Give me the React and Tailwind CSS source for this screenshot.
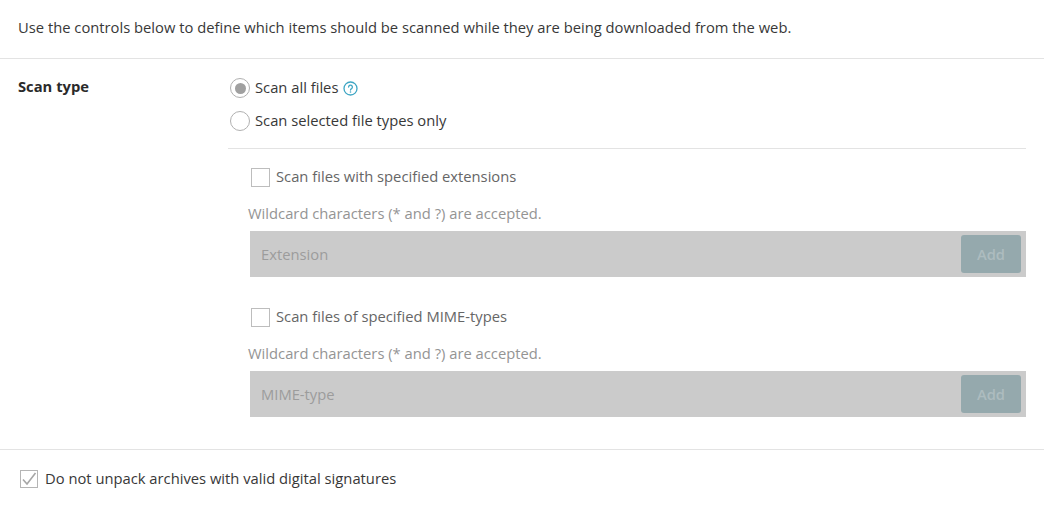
const Radio = ({ checked }) => (
  <span className="flex h-[20px] w-[20px] shrink-0 items-center justify-center rounded-full border-[1.5px] border-[#b0b0b0] bg-white">
    {checked && <span className="h-[11px] w-[11px] rounded-full bg-[#a0a0a0]" />}
  </span>
);

const HelpIcon = () => (
  <svg width="15" height="15" viewBox="0 0 15 15" fill="none" className="ml-[5px] mt-[1px]">
    <circle cx="7.5" cy="7.5" r="6.5" stroke="#3fa6c4" strokeWidth="1.3" />
    <path d="M5.6 6a1.9 1.9 0 1 1 2.9 1.6c-.7.4-1 .8-1 1.5" stroke="#3fa6c4" strokeWidth="1.3" strokeLinecap="round" />
    <circle cx="7.5" cy="11" r=".8" fill="#3fa6c4" />
  </svg>
);

const DisabledGroup = ({ label, placeholder }) => (
  <div>
    <div className="flex h-[20px] items-center pl-[23px]">
      <span className="h-[19px] w-[19px] shrink-0 border border-[#bdbdbd] bg-white" />
      <span className="ml-[6px] -translate-y-px text-[#666]">{label}</span>
    </div>
    <div className="mt-[16px] h-[20px] pl-[20px] leading-[20px] text-[#949494]">
      Wildcard characters (* and ?) are accepted.
    </div>
    <div className="ml-[22px] mt-[8px] flex h-[46px] items-center justify-between bg-[#cbcbcb] pl-[11px] pr-[5px]">
      <span className="text-[#9c9c9c]">{placeholder}</span>
      <span className="flex h-[38px] w-[60px] items-center justify-center rounded-[3px] bg-[#95a9ad] font-semibold text-[#adbcbf]">
        Add
      </span>
    </div>
  </div>
);

export default function App() {
  return (
    <div className="h-[514px] w-[1044px] overflow-hidden bg-white font-['Open_Sans',sans-serif] text-[14.75px] text-[#383838]">
      <div className="flex h-[59px] items-center border-b border-[#e3e3e3] pb-[3px] pl-[18px]">
        Use the controls below to define which items should be scanned while they are being downloaded from the web.
      </div>

      <div className="flex h-[391px] border-b border-[#e3e3e3] pr-[18px]">
        <div className="w-[228px] shrink-0 pl-[18px] pt-[17px] font-bold leading-[20px] text-[#2a2a2a]">Scan type</div>
        <div className="flex-1">
          <div className="mt-[19px] flex h-[20px] items-center pl-[2px]">
            <Radio checked />
            <span className="ml-[5px] -translate-y-px">Scan all files</span>
            <HelpIcon />
          </div>
          <div className="mt-[13px] flex h-[20px] items-center pl-[2px]">
            <Radio />
            <span className="ml-[5px] -translate-y-px">Scan selected file types only</span>
          </div>
          <div className="mt-[17px] border-t border-[#e3e3e3] pt-[18px]">
            <DisabledGroup label="Scan files with specified extensions" placeholder="Extension" />
            <div className="mt-[30px]">
              <DisabledGroup label="Scan files of specified MIME-types" placeholder="MIME-type" />
            </div>
          </div>
        </div>
      </div>

      <div className="mt-[19px] flex h-[20px] items-center pl-[20px]">
        <span className="flex h-[18px] w-[18px] shrink-0 items-center justify-center border border-[#b5b5b5] bg-white">
          <svg width="16" height="16" viewBox="0 0 16 16" fill="none">
            <path d="M2 8.5l4 4.5 8.5-11" stroke="#a6a6a6" strokeWidth="1.6" />
          </svg>
        </span>
        <span className="ml-[7px] -translate-y-px">Do not unpack archives with valid digital signatures</span>
      </div>
    </div>
  );
}
